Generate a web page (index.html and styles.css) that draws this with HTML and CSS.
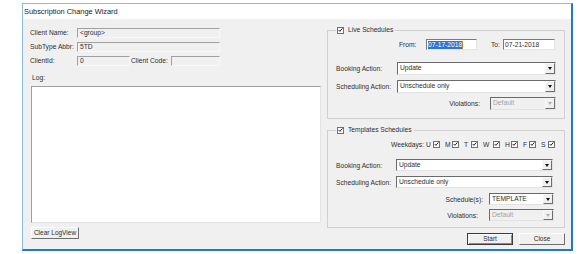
FILE: index.html
```html
<!DOCTYPE html>
<html lang="en">
<head>
    <meta charset="UTF-8">
    <title>Subscription Change Wizard</title>
    <link rel="stylesheet" href="styles.css">
</head>
<body>
    <div class="window">
        <div class="titlebar">Subscription Change Wizard</div>
        <div class="client">
            <!-- Left column: client info + log -->
            <div class="left">
                <div class="info-row">
                    <span class="lbl">Client Name:</span>
                    <span class="field wide">&lt;group&gt;</span>
                </div>
                <div class="info-row">
                    <span class="lbl">SubType Abbr:</span>
                    <span class="field wide">5TD</span>
                </div>
                <div class="info-row">
                    <span class="lbl">ClientId:</span>
                    <span class="field id">0</span>
                    <span class="lbl code">Client Code:</span>
                    <span class="field code"></span>
                </div>
                <div class="log-label">Log:</div>
                <div class="log-box"></div>
                <button class="btn clear">Clear LogView</button>
            </div>

            <!-- Right column: schedules -->
            <div class="right">
                <fieldset class="group live">
                    <legend><span class="legend-in"><span class="cb"><svg viewBox="0 0 7 7" width="6" height="6"><path d="M0.8 3.4 L2.7 5.4 L6.2 1.2" fill="none" stroke="#111" stroke-width="1.3"/></svg></span>Live Schedules</span></legend>
                    <div class="row from-row">
                        <span class="lbl-from">From:</span>
                        <span class="input"><span class="sel">07-17-2018</span><span class="caret"></span></span>
                        <span class="lbl-to">To:</span>
                        <span class="input to">07-21-2018</span>
                    </div>
                    <div class="row act-row first">
                        <span class="act-lbl">Booking Action:</span>
                        <span class="select"><span class="val">Update</span><span class="arrow"></span></span>
                    </div>
                    <div class="row act-row">
                        <span class="act-lbl">Scheduling Action:</span>
                        <span class="select"><span class="val">Unschedule only</span><span class="arrow"></span></span>
                    </div>
                    <div class="row end-row viol">
                        <span class="end-lbl">Violations:</span>
                        <span class="select small disabled"><span class="val">Default</span><span class="arrow"></span></span>
                    </div>
                </fieldset>

                <fieldset class="group templates">
                    <legend><span class="legend-in"><span class="cb"><svg viewBox="0 0 7 7" width="6" height="6"><path d="M0.8 3.4 L2.7 5.4 L6.2 1.2" fill="none" stroke="#111" stroke-width="1.3"/></svg></span>Templates Schedules</span></legend>
                    <div class="row days-row">
                        <span class="days-lbl">Weekdays:</span>
                        <span class="day">U</span><span class="cb"><svg viewBox="0 0 7 7" width="6" height="6"><path d="M0.8 3.4 L2.7 5.4 L6.2 1.2" fill="none" stroke="#111" stroke-width="1.3"/></svg></span>
                        <span class="day">M</span><span class="cb"><svg viewBox="0 0 7 7" width="6" height="6"><path d="M0.8 3.4 L2.7 5.4 L6.2 1.2" fill="none" stroke="#111" stroke-width="1.3"/></svg></span>
                        <span class="day">T</span><span class="cb"><svg viewBox="0 0 7 7" width="6" height="6"><path d="M0.8 3.4 L2.7 5.4 L6.2 1.2" fill="none" stroke="#111" stroke-width="1.3"/></svg></span>
                        <span class="day wide">W</span><span class="cb"><svg viewBox="0 0 7 7" width="6" height="6"><path d="M0.8 3.4 L2.7 5.4 L6.2 1.2" fill="none" stroke="#111" stroke-width="1.3"/></svg></span>
                        <span class="day narrow">H</span><span class="cb"><svg viewBox="0 0 7 7" width="6" height="6"><path d="M0.8 3.4 L2.7 5.4 L6.2 1.2" fill="none" stroke="#111" stroke-width="1.3"/></svg></span>
                        <span class="day narrow">F</span><span class="cb"><svg viewBox="0 0 7 7" width="6" height="6"><path d="M0.8 3.4 L2.7 5.4 L6.2 1.2" fill="none" stroke="#111" stroke-width="1.3"/></svg></span>
                        <span class="day">S</span><span class="cb"><svg viewBox="0 0 7 7" width="6" height="6"><path d="M0.8 3.4 L2.7 5.4 L6.2 1.2" fill="none" stroke="#111" stroke-width="1.3"/></svg></span>
                    </div>
                    <div class="row act-row first-t">
                        <span class="act-lbl">Booking Action:</span>
                        <span class="select t"><span class="val">Update</span><span class="arrow"></span></span>
                    </div>
                    <div class="row act-row">
                        <span class="act-lbl">Scheduling Action:</span>
                        <span class="select t"><span class="val">Unschedule only</span><span class="arrow"></span></span>
                    </div>
                    <div class="row end-row t sched">
                        <span class="end-lbl">Schedule(s):</span>
                        <span class="select small t"><span class="val">TEMPLATE</span><span class="arrow"></span></span>
                    </div>
                    <div class="row end-row t viol-t">
                        <span class="end-lbl">Violations:</span>
                        <span class="select small t disabled"><span class="val">Default</span><span class="arrow"></span></span>
                    </div>
                </fieldset>

                <div class="actions">
                    <button class="btn default">Start</button>
                    <button class="btn">Close</button>
                </div>
            </div>
        </div>
    </div>
</body>
</html>
```

FILE: styles.css
```css
* {
    box-sizing: border-box;
}

body {
    margin: 0;
    background: #fff;
    font-family: "Liberation Sans", Arial, sans-serif;
    font-size: 6.7px;
    color: #2e2e2e;
}

.window {
    margin: 3px 0 0 22px;
    width: 551px;
    border-left: 1px solid #8cbbe6;
    border-top: 1px solid #8cbbe6;
    border-right: 2px solid #1b7ad3;
    border-bottom: 2px solid #1b7ad3;
}

.titlebar {
    height: 15px;
    line-height: 15px;
    padding-left: 1px;
    background: #fff;
    font-size: 7.4px;
    color: #1a1a1a;
}

.client {
    display: flex;
    height: 230px;
    background: #f0f0f0;
}

/* left column */
.left {
    width: 304px;
    padding: 9px 0 0 7px;
}

.info-row {
    display: flex;
    align-items: center;
    height: 10px;
    margin-bottom: 4px;
}

.lbl {
    width: 47px;
    line-height: 10px;
}

.lbl.code {
    width: 41px;
    padding-left: 1px;
}

.field {
    height: 10px;
    line-height: 8px;
    padding-left: 2px;
    background: #f0f0f0;
    border: 1px solid;
    border-color: #a0a0a0 #f8f8f8 #f8f8f8 #a0a0a0;
}

.field.wide { width: 143px; }
.field.id { width: 53px; }
.field.code { width: 49px; }

.log-label {
    margin: 8px 0 0 2px;
    line-height: 8px;
}

.log-box {
    margin: 4px 0 0 1px;
    width: 290px;
    height: 137px;
    background: #fff;
    border: 1px solid;
    border-color: #a0a0a0 #e3e3e3 #e3e3e3 #a0a0a0;
}

.btn {
    display: block;
    height: 12px;
    padding: 0;
    font-family: inherit;
    font-size: 6.5px;
    line-height: 10px;
    color: #2e2e2e;
    background: #f0f0f0;
    border: 1px solid;
    border-color: #fdfdfd #6e6e6e #6e6e6e #fdfdfd;
}

.btn.clear {
    margin: 4px 0 0 1px;
    width: 48px;
}

/* right column */
.right {
    width: 244px;
    padding-top: 7px;
}

.group {
    margin: 0;
    padding: 0;
    min-width: 0;
    width: 238px;
    border: 1px solid #d0d0d0;
}

.group legend {
    margin-left: 8px;
    padding: 0 2px 0 1px;
    height: 8px;
}

.legend-in {
    display: flex;
    align-items: center;
    height: 8px;
    line-height: 8px;
}

.cb {
    display: flex;
    align-items: center;
    justify-content: center;
    width: 7px;
    height: 7px;
    margin-right: 4px;
    background: #fff;
    border: 1px solid #707070;
}

.row {
    display: flex;
    align-items: center;
}

.from-row {
    margin-top: 5px;
    padding-left: 71px;
    height: 11px;
}

.lbl-from { width: 27px; }

.lbl-to {
    width: 12px;
    margin-left: 14px;
}

.input {
    display: flex;
    align-items: center;
    width: 51px;
    height: 11px;
    padding-left: 1px;
    background: #fff;
    border: 1px solid;
    border-color: #7a7a7a #e3e3e3 #e3e3e3 #7a7a7a;
}

.input.to {
    width: 52px;
}

.sel {
    background: #2f73d6;
    color: #fff;
    line-height: 8px;
}

.caret {
    width: 1px;
    height: 8px;
    background: #e07a20;
}

.act-row {
    margin-top: 5px;
    padding-left: 8px;
}

.act-row.first { margin-top: 12px; }
.act-row.first-t { margin-top: 11px; }

.act-lbl { width: 61px; }
.templates .act-lbl { width: 60px; }

.select {
    display: flex;
    width: 159px;
    height: 13px;
    background: #fff;
    border: 1px solid;
    border-color: #6a6a6a #e3e3e3 #e3e3e3 #6a6a6a;
}

.select.t {
    width: 157px;
    height: 12px;
}

.select.small { width: 66px; }
.select.small.t { width: 65px; }

.val {
    flex: 1;
    padding-left: 2px;
    line-height: 10px;
}

.arrow {
    display: flex;
    align-items: center;
    justify-content: center;
    width: 10px;
    background: #f0f0f0;
    border: 1px solid;
    border-color: #f8f8f8 #6e6e6e #6e6e6e #f8f8f8;
}

.arrow::after {
    content: "";
    border-left: 2.5px solid transparent;
    border-right: 2.5px solid transparent;
    border-top: 3px solid #111;
}

.select.disabled {
    background: #f0f0f0;
    color: #a3a3a3;
}

.select.disabled .arrow::after {
    border-top-color: #b0b0b0;
}

.end-row {
    justify-content: flex-end;
    padding-right: 8px;
}

.end-row.t { padding-right: 10px; }

.viol {
    margin-top: 4px;
    margin-bottom: 8px;
}

.viol .end-lbl { margin-right: 10px; }

.sched { margin-top: 5px; }
.sched .end-lbl { margin-right: 6px; }

.viol-t {
    margin-top: 4px;
    margin-bottom: 6px;
}

.viol-t .end-lbl { margin-right: 11px; }

.templates {
    margin-top: 7px;
}

.days-row {
    margin-top: 6px;
    padding-left: 63px;
    height: 8px;
}

.days-lbl { width: 35px; }

.day { width: 7px; }
.day.wide { width: 10px; }
.day.narrow { width: 6px; }

.days-row .cb {
    margin-right: 5px;
}

.actions {
    display: flex;
    justify-content: flex-end;
    gap: 6px;
    width: 238px;
    margin-top: 5px;
}

.actions .btn {
    width: 46px;
}

.btn.default {
    border-color: #3a3a3a;
    box-shadow: inset 1px 1px #fdfdfd, inset -1px -1px #8a8a8a;
}
```
